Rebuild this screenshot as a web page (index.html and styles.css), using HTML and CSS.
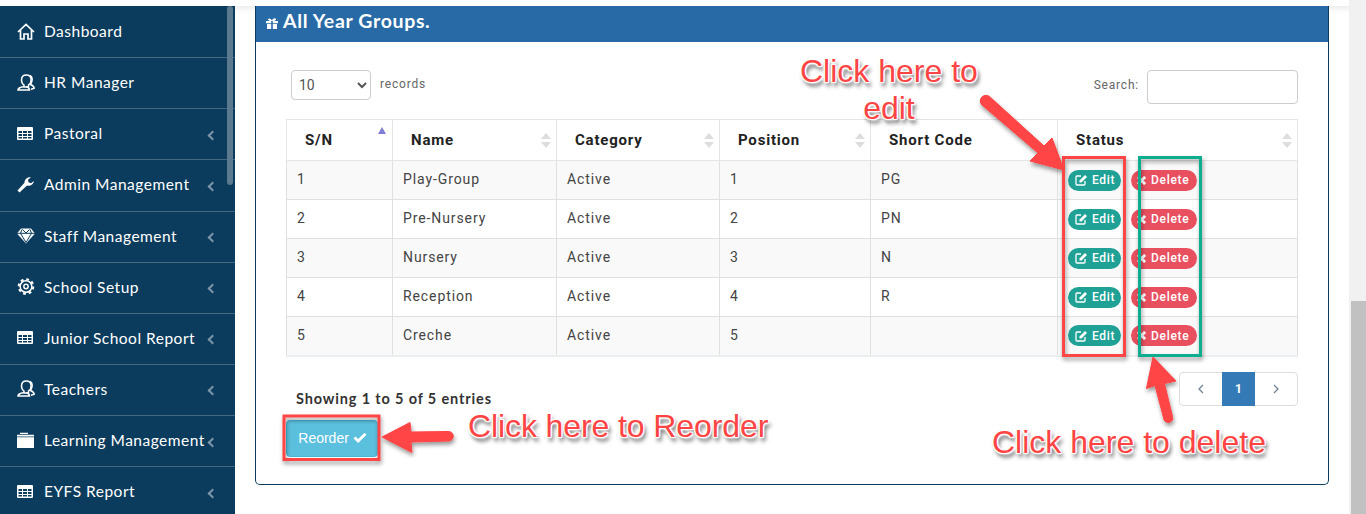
FILE: index.html
```html
<!DOCTYPE html>
<html lang="en">
<head>
<meta charset="utf-8">
<title>All Year Groups</title>
<link rel="stylesheet" href="styles.css">
</head>
<body>
<svg class="defs" width="0" height="0" aria-hidden="true">
  <symbol id="i-table" viewBox="0 0 16 13"><path fill="#fff" fill-rule="evenodd" d="M1 0h14a1 1 0 0 1 1 1v11a1 1 0 0 1-1 1H1a1 1 0 0 1-1-1V1a1 1 0 0 1 1-1zM1.500 4v2h3.500V4zM6 4v2h4V4zM11 4v2h3.500V4zM1.500 7v2h3.500V7zM6 7v2h4V7zM11 7v2h3.500V7zM1.500 10v1.500h3.500V10zM6 10v1.500h4V10zM11 10v1.500h3.500V10z"/></symbol>
  <symbol id="i-users" viewBox="0 0 18 17"><g fill="none" stroke="#fff" stroke-width="1.500"><path d="M4.500 6C4.500 3 6.500 1 9.300 1s4.800 2 4.800 5c0 2-1 4-2.600 5v2H7v-2C5.500 10 4.500 8 4.500 6z"/><path d="M7 12.500C4 13 1 13.500 1 16h11.500c0-1.500-1-2.500-3-3.500"/><path d="M13 1.500c2 1 2.500 3.500 1.800 6-.3 1-.8 2-1.300 3 2 .8 3.500 1.600 3.700 3.800l-3.200 1"/></g></symbol>
  <symbol id="i-edit" viewBox="0 0 13 12"><path fill="none" stroke="#fff" stroke-width="1.300" d="M10 7v3a1 1 0 0 1-1 1H2a1 1 0 0 1-1-1V3a1 1 0 0 1 1-1h4"/><path fill="#fff" d="M4.500 6.500L10 1l2 2-5.500 5.500H4.500z"/></symbol>
  <symbol id="i-x" viewBox="0 0 10 10"><path fill="none" stroke="#fff" stroke-width="3.200" d="M1 1l8 8M9 1l-8 8"/></symbol>
</svg>

<div class="app">
  <div class="topbar"></div>
  <div class="shell">
    <nav class="sidebar">
      <a class="nav-item"><svg class="nav-icon" viewBox="0 0 18 17"><path fill="none" stroke="#fff" stroke-width="1.700" d="M1 9l8-7.500L17 9M3.500 7v9H7v-5h4v5h3.500V7"/></svg><span class="nav-label">Dashboard</span></a>
      <a class="nav-item"><svg class="nav-icon"><use href="#i-users"/></svg><span class="nav-label">HR Manager</span></a>
      <a class="nav-item"><svg class="nav-icon nav-icon-table"><use href="#i-table"/></svg><span class="nav-label">Pastoral</span><span class="nav-caret"></span></a>
      <a class="nav-item"><svg class="nav-icon" viewBox="0 0 18 17"><path fill="#fff" d="M.5 14.500l2 2L10 9.500c3 1 6.500-1 7-4.500l-3 2.300-2.500-1-.5-2.500 3-2.500C10.500.5 7.300 3.300 7.500 6.800z"/></svg><span class="nav-label">Admin Management</span><span class="nav-caret"></span></a>
      <a class="nav-item"><svg class="nav-icon" viewBox="0 0 18 16"><path fill="#fff" d="M4 1h10l4 5-9 10L0 6z"/><path fill="none" stroke="#0b3c5d" stroke-width="1" d="M0 5.800h18M5 2l-1.500 3.800L9 15l5.500-9.200L13 2M5.500 2L9 5.500 12.500 2"/></svg><span class="nav-label">Staff Management</span><span class="nav-caret"></span></a>
      <a class="nav-item"><svg class="nav-icon" viewBox="0 0 18 18"><circle cx="9" cy="9" r="6.200" fill="none" stroke="#fff" stroke-width="1.600"/><circle cx="9" cy="9" r="7.700" fill="none" stroke="#fff" stroke-width="2.200" stroke-dasharray="3 3.050"/><circle cx="9" cy="9" r="2.300" fill="none" stroke="#fff" stroke-width="1.500"/></svg><span class="nav-label">School Setup</span><span class="nav-caret"></span></a>
      <a class="nav-item"><svg class="nav-icon nav-icon-table"><use href="#i-table"/></svg><span class="nav-label">Junior School Report</span><span class="nav-caret"></span></a>
      <a class="nav-item"><svg class="nav-icon"><use href="#i-users"/></svg><span class="nav-label">Teachers</span><span class="nav-caret"></span></a>
      <a class="nav-item"><svg class="nav-icon" viewBox="0 0 18 16"><path fill="#fff" d="M3 .2h8v1.200H3zM0 2.200h17v1.800H0zM0 4.800h17v10.700H0z"/></svg><span class="nav-label">Learning Management</span><span class="nav-caret"></span></a>
      <a class="nav-item"><svg class="nav-icon nav-icon-table"><use href="#i-table"/></svg><span class="nav-label">EYFS Report</span><span class="nav-caret"></span></a>
      <div class="sidebar-thumb"></div>
    </nav>

    <main class="content">
      <section class="panel">
        <h2 class="panel-heading"><svg class="gift" viewBox="0 0 12 11"><path fill="#fff" d="M0 3h5.200v2.300H0zM6.800 3H12v2.300H6.800zM1 6h4.200v5H1zM6.800 6H11v5H6.800zM2 1.200C3 -.2 5 .8 6 2.500 7-.1 10-.2 10 1.500 10 2.400 9 3 6 3S2 2.400 2 1.200z"/></svg>All Year Groups.</h2>
        <div class="panel-body">
          <div class="controls">
            <div class="length"><select class="length-select"><option>10</option></select><span class="muted">records</span></div>
            <label class="search muted">Search:<input class="search-input" type="text"></label>
          </div>
          <table class="grid">
            <colgroup><col class="c1"><col class="c2"><col class="c3"><col class="c4"><col class="c5"><col></colgroup>
            <thead>
              <tr>
                <th><div class="th-in">S/N<span class="sort sort-active"></span></div></th>
                <th><div class="th-in">Name<span class="sort"></span></div></th>
                <th><div class="th-in">Category<span class="sort"></span></div></th>
                <th><div class="th-in">Position<span class="sort"></span></div></th>
                <th><div class="th-in">Short Code</div></th>
                <th><div class="th-in">Status<span class="sort"></span></div></th>
              </tr>
            </thead>
            <tbody>
              <tr><td>1</td><td>Play-Group</td><td>Active</td><td>1</td><td>PG</td><td><div class="acts"><span class="pill pill-edit"><svg class="pill-icon"><use href="#i-edit"/></svg>Edit</span><span class="pill pill-del"><svg class="pill-icon pill-icon-x"><use href="#i-x"/></svg>Delete</span></div></td></tr>
              <tr><td>2</td><td>Pre-Nursery</td><td>Active</td><td>2</td><td>PN</td><td><div class="acts"><span class="pill pill-edit"><svg class="pill-icon"><use href="#i-edit"/></svg>Edit</span><span class="pill pill-del"><svg class="pill-icon pill-icon-x"><use href="#i-x"/></svg>Delete</span></div></td></tr>
              <tr><td>3</td><td>Nursery</td><td>Active</td><td>3</td><td>N</td><td><div class="acts"><span class="pill pill-edit"><svg class="pill-icon"><use href="#i-edit"/></svg>Edit</span><span class="pill pill-del"><svg class="pill-icon pill-icon-x"><use href="#i-x"/></svg>Delete</span></div></td></tr>
              <tr><td>4</td><td>Reception</td><td>Active</td><td>4</td><td>R</td><td><div class="acts"><span class="pill pill-edit"><svg class="pill-icon"><use href="#i-edit"/></svg>Edit</span><span class="pill pill-del"><svg class="pill-icon pill-icon-x"><use href="#i-x"/></svg>Delete</span></div></td></tr>
              <tr><td>5</td><td>Creche</td><td>Active</td><td>5</td><td></td><td><div class="acts"><span class="pill pill-edit"><svg class="pill-icon"><use href="#i-edit"/></svg>Edit</span><span class="pill pill-del"><svg class="pill-icon pill-icon-x"><use href="#i-x"/></svg>Delete</span></div></td></tr>
            </tbody>
          </table>
          <div class="table-foot">
            <div class="info">Showing 1 to 5 of 5 entries</div>
            <div class="pager"><span class="pg"><svg class="pg-c" viewBox="0 0 6 10"><path d="M5 1L1 5l4 4" fill="none" stroke="#6f8296" stroke-width="1.300"/></svg></span><span class="pg pg-on">1</span><span class="pg"><svg class="pg-c" viewBox="0 0 6 10"><path d="M1 1l4 4-4 4" fill="none" stroke="#6f8296" stroke-width="1.300"/></svg></span></div>
          </div>
          <button class="reorder" type="button">Reorder <svg class="check" viewBox="0 0 14 11"><path d="M1.500 5.500l3.700 3.500L12.500 1.800" fill="none" stroke="#fff" stroke-width="2.800"/></svg></button>
        </div>
      </section>
    </main>
    <div class="page-scroll"><div class="page-thumb"></div></div>
  </div>

  <svg class="marks" viewBox="0 0 1366 514" width="1366" height="514" aria-hidden="true">
    <defs>
      <filter id="ds" x="-20%" y="-20%" width="140%" height="140%"><feDropShadow dx="1" dy="3" stdDeviation="2" flood-color="#000" flood-opacity=".4"/></filter>
    </defs>
    <g filter="url(#ds)">
      <rect x="1063.500" y="157.500" width="61" height="198" fill="none" stroke="#ff4444" stroke-width="3"/>
      <rect x="1139.500" y="157.500" width="61" height="198" fill="none" stroke="#0fae8f" stroke-width="3"/>
      <rect x="284" y="416" width="95" height="43.500" fill="none" stroke="#ff4444" stroke-width="3"/>
      <path fill="#ff4444" stroke="#ff4444" stroke-linejoin="round" d="M982 105a5.500 5.500 0 0 1 8-8L1044 146l8-8 12 32-34-9 8-8z"/>
      <path fill="#ff4444" stroke="#ff4444" stroke-linejoin="round" d="M1153 357l23 24-11.500 2.500 8 33a4.500 4.500 0 0 1-8.500 3l-9-34-8.500 3z"/>
      <path fill="#ff4444" stroke="#ff4444" stroke-linejoin="round" d="M382 437l28-14.500 1 9.500 37-.500a4.500 4.500 0 0 1 1 9.500l-38 1 1 10.500z"/>
    </g>
  </svg>
  <div class="note note-edit">Click here to<br>edit</div>
  <div class="note note-reorder">Click here to Reorder</div>
  <div class="note note-delete">Click here to delete</div>
</div>
</body>
</html>
```
FILE: styles.css
```css
* { box-sizing: border-box; }
html, body { margin: 0; padding: 0; height: 514px; overflow: hidden; background: #fff; }
body { font-family: Roboto, "Liberation Sans", sans-serif; color: #333; }
.defs { position: absolute; }

.app { position: relative; width: 1366px; height: 514px; overflow: hidden; display: flex; flex-direction: column; }
.topbar { position: relative; z-index: 1; height: 6px; background: #fff; flex: none; box-shadow: 0 2px 6px rgba(0,0,0,.1); }
.shell { flex: 1; display: flex; min-height: 0; }

.sidebar { position: relative; z-index: 2; width: 235px; flex: none; padding-top: 1px; background: #0b3c5d; overflow: hidden; }
.nav-item { display: flex; align-items: center; height: 51.14px; padding: 0 0 2px 17px; border-bottom: 1px solid #47697f; color: #fff; font-family: Lato, sans-serif; font-size: 15.500px; letter-spacing: .5px; white-space: nowrap; }
.nav-icon { width: 18px; height: 17px; margin-right: 9px; flex: none; }
.nav-icon-table { width: 16px; height: 13px; margin-right: 11px; }
.nav-label { flex: none; }
.nav-caret { position: absolute; left: 209px; width: 7px; height: 7px; margin-top: 4px; border-left: 2px solid #7a95a8; border-bottom: 2px solid #7a95a8; transform: rotate(45deg); }
.sidebar-thumb { position: absolute; top: 0; left: 227px; width: 6px; height: 179px; border-radius: 3px; background: #5c7a8f; }

.content { flex: 1; min-width: 0; padding: 0 20px; }
.panel { position: relative; z-index: 2; height: 479px; background: #fff; border: 1px solid #0b3c5d; border-top: 0; border-radius: 0 0 5px 5px; }
.panel-heading { display: flex; align-items: center; height: 36px; margin: 0; padding: 0 0 7px 10px; background: #276aa5; color: #fff; font-family: Lato, sans-serif; font-size: 19.500px; font-weight: 700; letter-spacing: .65px; }
.gift { width: 12px; height: 11px; margin: 6px 5px 0 0; }
.panel-body { padding: 28px 30px 0; }

.controls { display: flex; justify-content: space-between; height: 49px; }
.length { display: flex; align-items: flex-start; padding-left: 5px; }
.length-select { width: 80px; height: 30px; padding: 0 0 0 3px; border: 1px solid #ccc; border-radius: 4px; background: #fff; color: #555; font-family: Roboto, sans-serif; font-size: 14px; }
.muted { font-size: 12px; letter-spacing: .8px; color: #666; }
.length .muted { margin: 7px 0 0 9px; }
.search { display: flex; align-items: flex-start; line-height: 31px; }
.search-input { width: 151px; height: 34px; margin-left: 8px; border: 1px solid #ccc; border-radius: 4px; background: #fff; }

.grid { width: 1012px; table-layout: fixed; border-collapse: collapse; font-size: 14px; letter-spacing: .9px; color: #444; }
.c1 { width: 106px; } .c2 { width: 164px; } .c3 { width: 163px; } .c4 { width: 151px; } .c5 { width: 187px; }
.grid th { height: 41px; padding: 0 5px 0 18px; border: 1px solid #e4e4e4; text-align: left; font-size: 15px; font-weight: 700; letter-spacing: .8px; color: #222; }
.th-in { display: flex; justify-content: space-between; align-items: center; }
.sort { position: relative; display: block; width: 10px; height: 15px; flex: none; }
.sort::before, .sort::after { content: ""; position: absolute; left: 0; border-left: 5px solid transparent; border-right: 5px solid transparent; }
.sort::before { top: 0; border-bottom: 6px solid #ddd; }
.sort::after { bottom: 0; border-top: 6px solid #ddd; }
.sort-active { left: 0; }
.sort-active::before { top: -6px; left: 1px; border-left-width: 4px; border-right-width: 4px; border-bottom: 7px solid #7f7fd5; }
.sort-active::after { display: none; }
.grid td { height: 39px; padding: 0 0 2px 10px; border: 1px solid #e0e0e0; }
.grid tbody tr:nth-child(odd) { background: #f9f9f9; }
.grid tbody tr:last-child td { border-bottom: 2px solid #eceeef; }
.acts { display: flex; gap: 10px; }
.pill { display: flex; align-items: center; height: 21px; margin-top: 2px; border-radius: 11px; color: #fff; font-size: 12px; font-weight: 500; letter-spacing: .7px; }
.pill-edit { width: 53px; padding-left: 7px; background: #1fa196; }
.pill-del { width: 66px; padding-left: 6px; background: #e8505f; }
.pill-icon { width: 13px; height: 12px; margin-right: 4px; }
.pill-icon-x { width: 9px; height: 9px; margin-right: 5px; }

.table-foot { display: flex; justify-content: space-between; height: 63px; padding: 15px 0 0 10px; }
.info { padding-top: 18px; font-family: Lato, sans-serif; font-size: 14.500px; font-weight: 700; letter-spacing: .85px; color: #333; }
.pager { display: flex; height: 34px; border: 1px solid #ddd; border-radius: 4px; }
.pg { display: flex; align-items: center; justify-content: center; width: 42px; }
.pg:last-child { width: 42px; }
.pg-on { width: 33px; margin: -1px 0; background: #337ab7; color: #fff; font-size: 12px; font-weight: 700; }
.pg-c { width: 6px; height: 10px; }
.reorder { display: block; width: 92px; height: 37px; padding: 0 0 0 1px; border: 1px solid #46b8da; border-radius: 4px; background: #5bc0de; color: #fff; font-family: "Liberation Sans", sans-serif; font-size: 14px; }
.check { width: 14px; height: 11px; }

.page-scroll { position: relative; z-index: 2; margin-top: -6px; width: 17px; flex: none; padding-left: 2px; background: #f1f1f1; }
.page-thumb { height: 213px; margin-top: 301px; background: #c1c1c1; }

.marks { position: absolute; z-index: 3; top: 0; left: 0; pointer-events: none; }
.note { position: absolute; z-index: 4; font-family: "Liberation Sans", sans-serif; font-size: 32px; line-height: 37px; text-align: center; white-space: nowrap; color: #ff4444; text-shadow: 0 0 2px #fff, 0 0 2px #fff, 0 0 2px #fff, 0 0 3px #fff, 1px 1px 1px #fff, -1px -1px 1px #fff, 1px -1px 1px #fff, -1px 1px 1px #fff, 2px 4px 4px rgba(0,0,0,.75); }
.note-edit { left: 800px; top: 53px; }
.note-reorder { left: 468px; top: 408px; letter-spacing: -.1px; }
.note-delete { left: 992px; top: 424px; }
```
